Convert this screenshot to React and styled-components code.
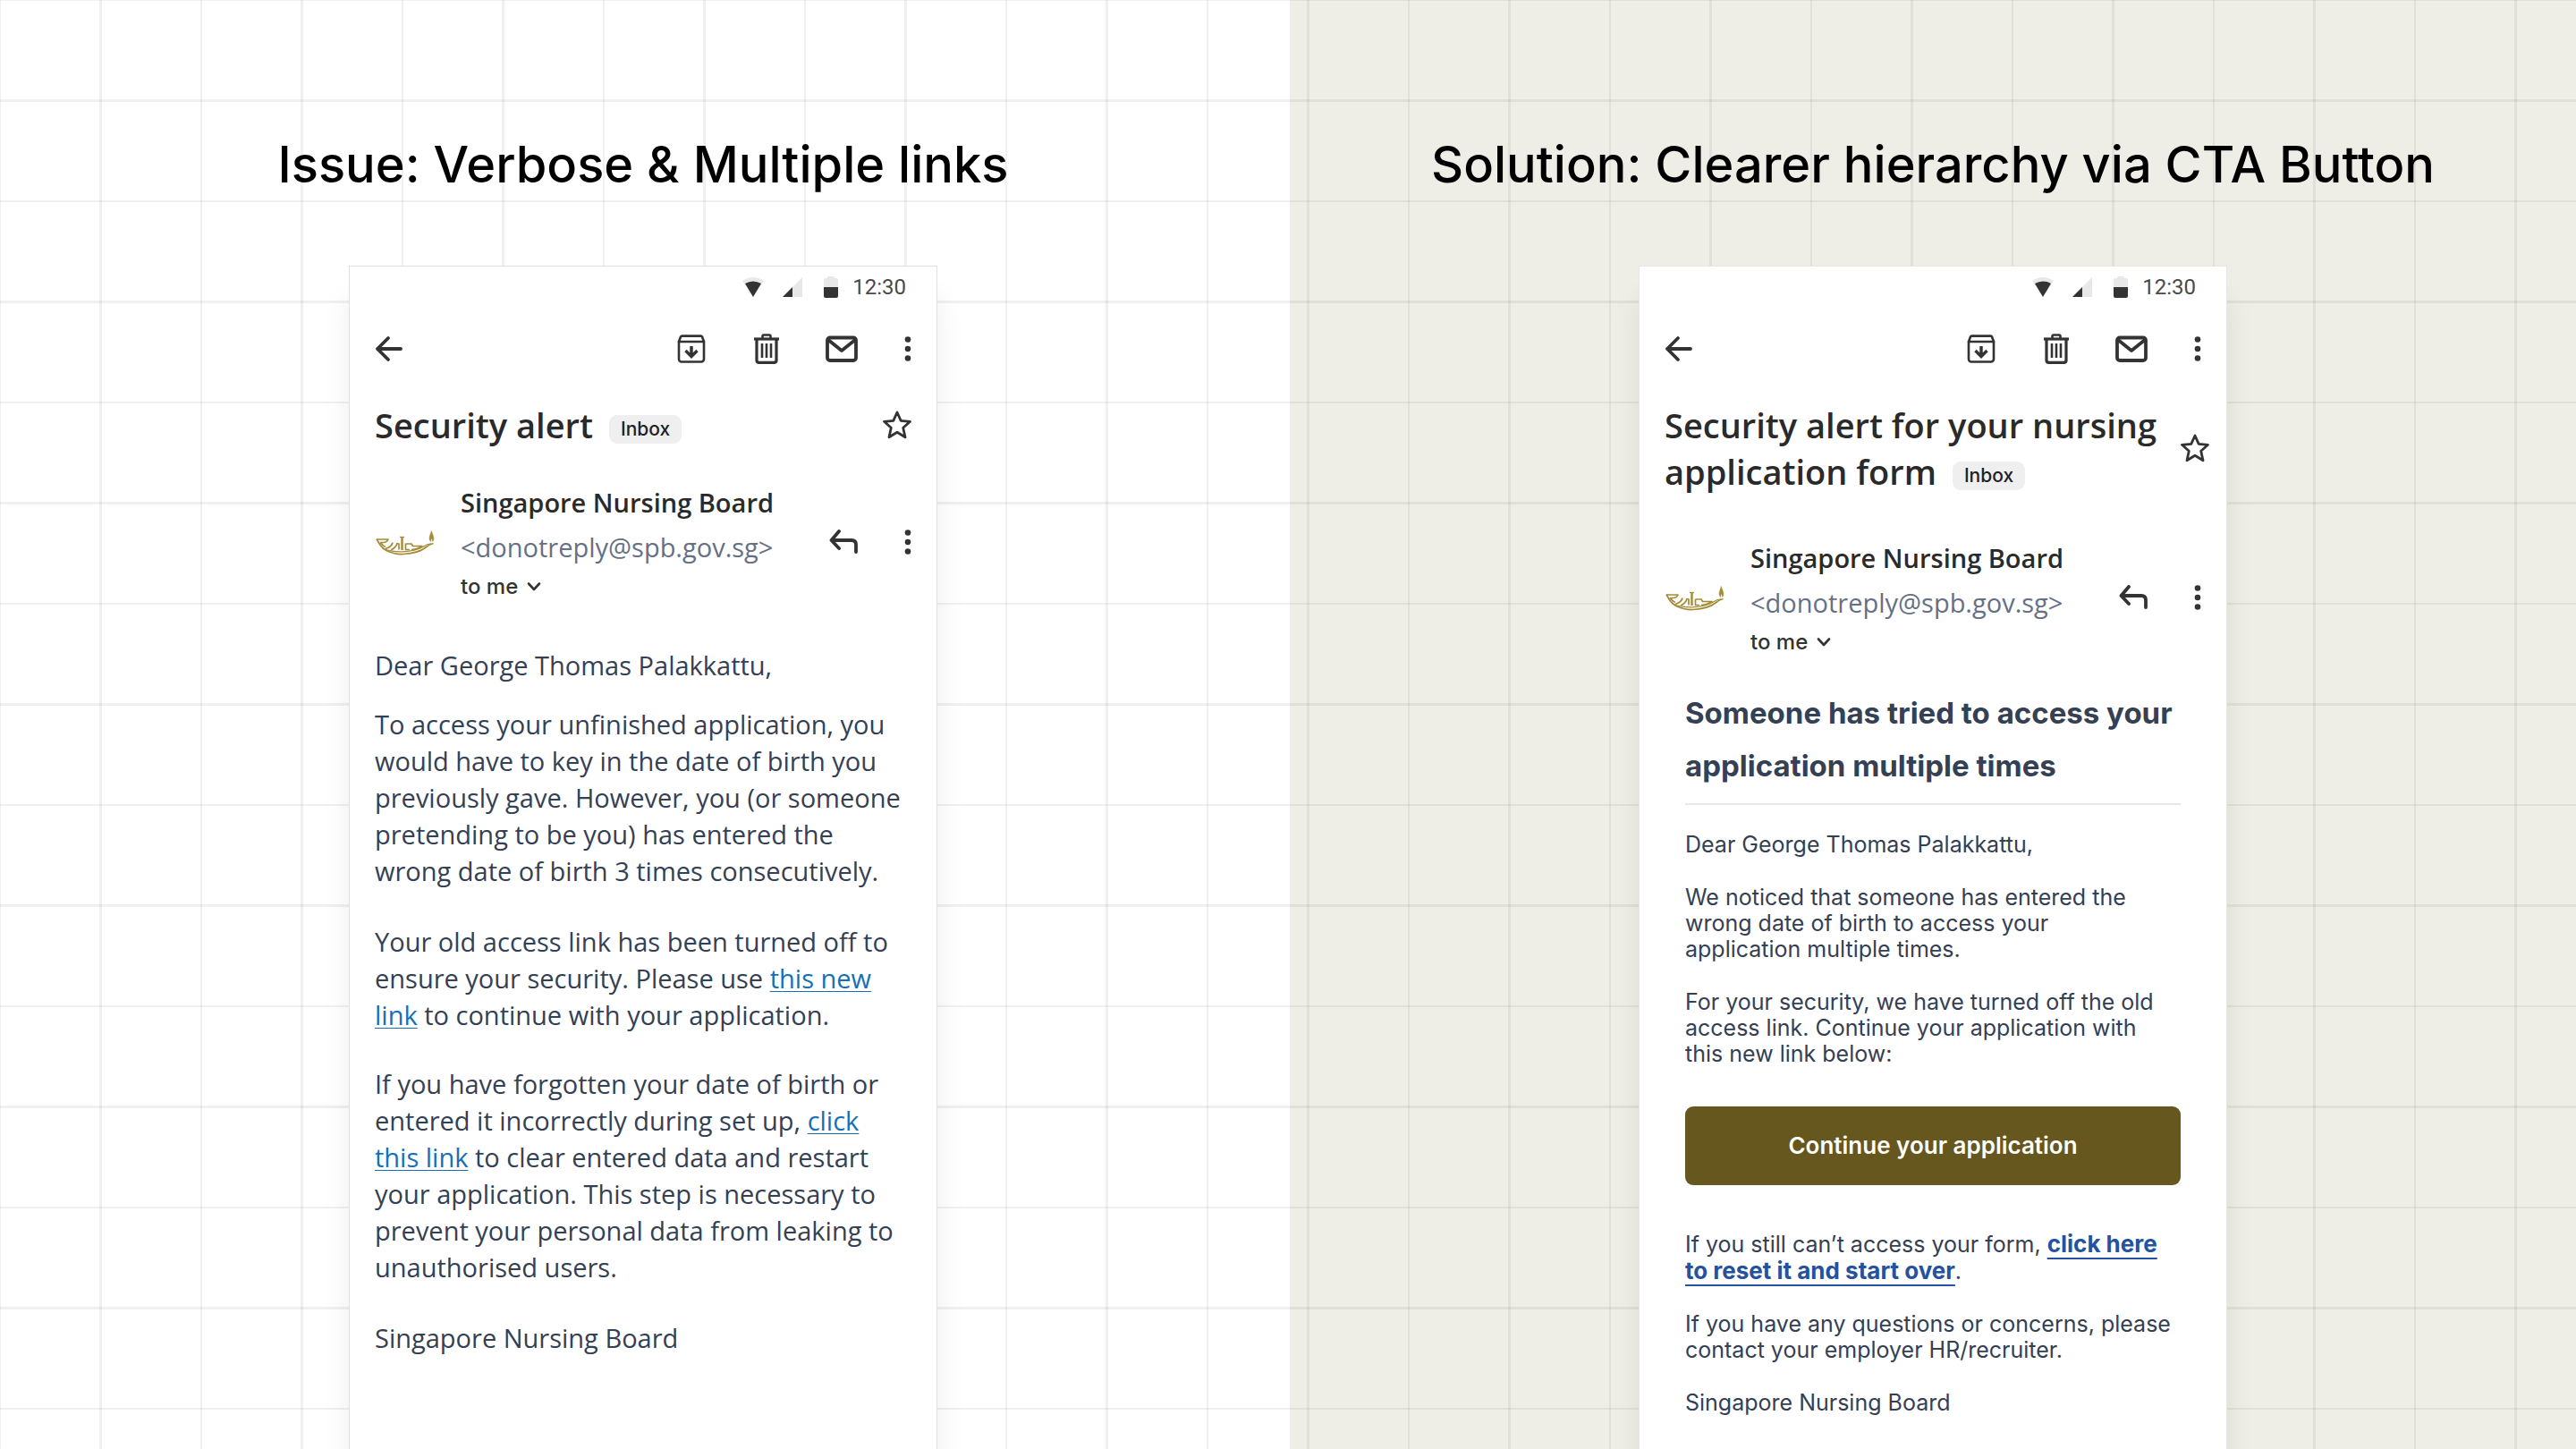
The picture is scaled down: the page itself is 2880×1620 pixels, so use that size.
import React from "react";
import styled, { createGlobalStyle } from "styled-components";

const Global = createGlobalStyle`
  *, *::before, *::after { box-sizing: border-box; }
  html, body { margin: 0; height: 100%; overflow: hidden; }
  #root { height: 100%; }
  h1, h2, h3, p { margin: 0; }
`;

const OPEN = `"Open Sans", "Noto Sans", sans-serif`;
const INTER = `Inter, "Liberation Sans", sans-serif`;
const INK = "#333333";
const SLATE = "#344054";

const Page = styled.main`
  display: grid;
  grid-template-columns: 1fr 1fr;
  column-gap: 4px;
  height: 100vh;
  overflow: hidden;
  position: relative;
  background: #ffffff;
`;

const Panel = styled.section`
  display: flex;
  flex-direction: column;
  align-items: center;
  min-width: 0;
  padding-top: 144px;
  background: ${(p) => p.$tone};
`;

/* Two rules per 225px tile give an even graph-paper rhythm. */
const GridLines = styled.div`
  position: absolute;
  inset: 0;
  pointer-events: none;
  --rule: rgba(0, 0, 0, 0.06);
  background-image:
    linear-gradient(to right, transparent 110px, var(--rule) 110px 113px, transparent 113px 223px, var(--rule) 223px),
    linear-gradient(to bottom, transparent 110px, var(--rule) 110px 113px, transparent 113px 223px, var(--rule) 223px);
  background-size: 225px 225px;
  background-position: 1px 1px;
`;

const PanelTitle = styled.h1`
  position: relative;
  font: 500 56px/80px ${INTER};
  color: #000;
  white-space: nowrap;
`;

const Phone = styled.article`
  position: relative;
  flex: 1 0 auto;
  width: 658px;
  margin-top: 73px;
  background: #fff;
  border: 1px solid ${(p) => p.$edge};
  border-bottom: 0;
  box-shadow: 0 36px 30px rgba(0, 0, 0, 0.08);
`;

const StatusBar = styled.div`
  display: flex;
  align-items: center;
  justify-content: flex-end;
  height: 46px;
  padding-right: 34px;
  svg { display: block; }
`;

const StatusIcons = styled.span`
  display: flex;
  align-items: center;
  gap: 20px;
`;

const Clock = styled.time`
  margin-left: 16px;
  font: 400 24px/30px Roboto, sans-serif;
  color: #4a4a4a;
`;

const Toolbar = styled.nav`
  display: flex;
  align-items: center;
  height: 92px;
  padding: 0 22px 0 24px;
`;

const ToolGroup = styled.div`
  display: flex;
  align-items: center;
  gap: 44px;
  margin-left: auto;
`;

const IconButton = styled.button`
  display: flex;
  align-items: center;
  justify-content: center;
  flex: none;
  width: ${(p) => p.$w || 40}px;
  height: 40px;
  padding: 0;
  border: 0;
  background: none;
  color: ${INK};
  svg { display: block; flex: none; }
`;

const SubjectRow = styled.header`
  display: flex;
  align-items: center;
  justify-content: space-between;
  padding: 13px ${(p) => p.$right}px 0 28px;
`;

const Subject = styled.h2`
  font: 600 38px/52px ${OPEN};
  color: #2a2a2a;
  white-space: nowrap;
`;

const Badge = styled.span`
  display: inline-block;
  height: 32px;
  margin-left: 18px;
  padding: 0 13px;
  border-radius: 9px;
  background: #efefef;
  vertical-align: middle;
  font: 500 21px/32px ${INTER};
  color: #222;
`;

const SenderRow = styled.div`
  display: flex;
  align-items: center;
  padding: ${(p) => p.$top}px 22px 0 28px;
`;

const Sender = styled.div`
  flex: 1;
  margin-left: 28px;
`;

const Name = styled.h3`
  font: 600 29px/50px ${OPEN};
  color: #2a2a2a;
`;

const Email = styled.p`
  font: 400 29px/50px ${OPEN};
  color: #667085;
`;

const Recipient = styled.button`
  display: flex;
  align-items: center;
  gap: 10px;
  height: 38px;
  padding: 0;
  border: 0;
  background: none;
  font: 500 24px/38px ${INTER};
  color: ${INK};
`;

const SenderTools = styled.div`
  display: flex;
  gap: 42px;
`;

const LetterBody = styled.div`
  display: flex;
  flex-direction: column;
  padding: 48px 34px 0 28px;
  font: 400 29px/41px ${OPEN};
  color: ${SLATE};
`;

const LetterText = styled.p`
  margin-top: ${(p) => p.$gap || 0}px;
`;

const TextLink = styled.a`
  color: #1570b8;
  text-decoration: underline;
  text-decoration-thickness: 1px;
  text-underline-offset: 3px;
`;

const NoticeBody = styled.div`
  display: flex;
  flex-direction: column;
  gap: 30px;
  padding: 31px 51px 0;
  font: 400 25px/29px ${INTER};
  color: ${SLATE};
`;

const NoticeTitle = styled.h3`
  padding-bottom: 12px;
  border-bottom: 2px solid #e4e7ec;
  font: 700 33px/59px ${INTER};
`;

const CallToAction = styled.button`
  height: 88px;
  margin: 14px 0 21px;
  border: 0;
  border-radius: 9px;
  background: #66571e;
  color: #fff;
  font: 600 26px/32px ${INTER};
`;

const StrongLink = styled.a`
  color: #2452a0;
  font-size: 26px;
  font-weight: 700;
  text-decoration: underline;
  text-decoration-thickness: 2px;
  text-underline-offset: 6px;
  text-decoration-skip-ink: none;
`;

const stroke = { fill: "none", stroke: "currentColor", strokeLinecap: "round", strokeLinejoin: "round" };

const WifiIcon = () => (
  <svg width="26" height="24" viewBox="0 0 26 24">
    <path d="M1 5Q13-3 25 5L13 23Z" fill="#e8e8e8" />
    <path d="M4 8Q13 3 22 8L13 23Z" fill={INK} />
  </svg>
);
const SignalIcon = () => (
  <svg width="26" height="24" viewBox="0 0 26 24">
    <path d="M22 1V23H0Z" fill="#e8e8e8" />
    <path d="M11 12V23H0Z" fill={INK} />
  </svg>
);
const BatteryIcon = () => (
  <svg width="16" height="26" viewBox="0 0 16 26">
    <path d="M0 5a2 2 0 0 1 2-2H4V2a1 1 0 0 1 1-1H11a1 1 0 0 1 1 1V3H14a2 2 0 0 1 2 2V13H0Z" fill="#e8e8e8" />
    <path d="M0 13H16V23a2 2 0 0 1-2 2H2a2 2 0 0 1-2-2Z" fill={INK} />
  </svg>
);

const BackIcon = () => (
  <svg width="32" height="30" viewBox="0 0 32 30" {...stroke} strokeWidth="3.8">
    <path d="M29 15H3M15 3L3 15L15 27" />
  </svg>
);
const ArchiveIcon = () => (
  <svg width="32" height="32" viewBox="0 0 32 32" {...stroke} strokeWidth="2.6">
    <path d="M2 8L4 2.5Q4.400 1.600 5.500 1.600H26.500Q27.600 1.600 28 2.500L30 8V27.500A3 3 0 0 1 27 30.500H5A3 3 0 0 1 2 27.500Z" />
    <path d="M2 8H30" />
    <path d="M16 13V24M9.500 18L16 24.500L22.500 18" strokeWidth="3.400" strokeLinecap="butt" strokeLinejoin="miter" />
  </svg>
);
const TrashIcon = () => (
  <svg width="28" height="34" viewBox="0 0 28 34" {...stroke} strokeWidth="3.2" strokeLinecap="butt">
    <path d="M0 6H28" />
    <path d="M9.500 6V3A1.500 1.500 0 0 1 11 1.500H17A1.500 1.500 0 0 1 18.500 3V6" strokeWidth="2.600" />
    <path d="M3 6V30A2.500 2.500 0 0 0 5.500 32.300H22.500A2.500 2.500 0 0 0 25 30V6" />
    <path d="M9 11V27M14 11V27M19 11V27" strokeWidth="2.600" />
  </svg>
);
const MailIcon = () => (
  <svg width="36" height="30" viewBox="0 0 36 30" {...stroke} strokeWidth="3.800">
    <rect x="2" y="2.500" width="32" height="25.500" rx="3" />
    <path d="M3 5L18 17L33 5" />
  </svg>
);
const MoreIcon = () => (
  <svg width="8" height="30" viewBox="0 0 8 30" fill="currentColor">
    <circle cx="4" cy="4.500" r="3.300" />
    <circle cx="4" cy="15" r="3.300" />
    <circle cx="4" cy="25.500" r="3.300" />
  </svg>
);
const StarIcon = () => (
  <svg width="34" height="34" viewBox="0 0 34 34" {...stroke} strokeWidth="2.800">
    <path d="M17 3L21.200 12.300L31.500 13.300L23.700 20.200L26 30.800L17 25.300L8 30.800L10.300 20.200L2.500 13.300L12.800 12.300Z" />
  </svg>
);
const ReplyIcon = () => (
  <svg width="32" height="28" viewBox="0 0 32 28" {...stroke} strokeWidth="3.800">
    <path d="M11 2L2.500 12L11 21M3 12H25Q30 12 30 17V25" />
  </svg>
);
const ChevronIcon = () => (
  <svg width="16" height="12" viewBox="0 0 16 12" {...stroke} strokeWidth="2.600">
    <path d="M2 2.500L8 9L14 2.500" />
  </svg>
);

/* Oil-lamp crest */
const LampLogo = () => (
  <svg width="68" height="38" viewBox="0 0 68 38" fill="none" stroke="#a38c38" strokeLinejoin="round">
    <path d="M2 16H15Q13.500 19.500 9.500 19.500H6.500Q9 23.500 12 24.500" strokeWidth="1.700" />
    <path d="M2 15.500Q7 25.500 13 28.500Q22 33 32 32.500Q49 31.500 57 25Q61 21.500 65.500 20.500" strokeWidth="1.700" />
    <path d="M8.500 26Q17 30 31 29.800Q47 29 54.500 24Q58.500 21 63 20.800" strokeWidth="1.200" />
    <path d="M28 13.500H33" strokeWidth="1.300" />
    <path d="M30.500 13.500V28" strokeWidth="2.400" />
    <path d="M12 26.500Q19 24.500 20 19.500M18 28Q24 25 25 20.500L27 21V27.500" strokeWidth="1.700" />
    <path d="M34.500 20.500V27.500H39M35 21H41L42.500 23.500H53Q48 27 41 27.500" strokeWidth="1.700" />
    <path d="M62.500 18.500C59.500 14.500 62 11.500 63.300 6.500C64.700 11.500 67.500 14.500 64.800 18.500L63.600 14Z" fill="#a38c38" strokeWidth="0.500" />
  </svg>
);

function Mail({ edge, subject, starInset, senderTop, children }) {
  return (
    <Phone $edge={edge}>
      <StatusBar>
        <StatusIcons>
          <WifiIcon />
          <SignalIcon />
          <BatteryIcon />
        </StatusIcons>
        <Clock>12:30</Clock>
      </StatusBar>
      <Toolbar aria-label="Message actions">
        <IconButton aria-label="Back"><BackIcon /></IconButton>
        <ToolGroup>
          <IconButton aria-label="Archive"><ArchiveIcon /></IconButton>
          <IconButton aria-label="Delete"><TrashIcon /></IconButton>
          <IconButton aria-label="Mark as unread"><MailIcon /></IconButton>
          <IconButton aria-label="More" $w={20}><MoreIcon /></IconButton>
        </ToolGroup>
      </Toolbar>
      <SubjectRow $right={starInset}>
        <Subject>{subject}<Badge>Inbox</Badge></Subject>
        <IconButton aria-label="Star" $w={34}><StarIcon /></IconButton>
      </SubjectRow>
      <SenderRow $top={senderTop}>
        <LampLogo />
        <Sender>
          <Name>Singapore Nursing Board</Name>
          <Email>&lt;donotreply@spb.gov.sg&gt;</Email>
          <Recipient>to me <ChevronIcon /></Recipient>
        </Sender>
        <SenderTools>
          <IconButton aria-label="Reply"><ReplyIcon /></IconButton>
          <IconButton aria-label="More" $w={20}><MoreIcon /></IconButton>
        </SenderTools>
      </SenderRow>
      {children}
    </Phone>
  );
}

export default function App() {
  return (
    <>
      <Global />
      <Page>
        <Panel $tone="#ffffff">
          <GridLines />
          <PanelTitle>Issue: Verbose &amp; Multiple links</PanelTitle>
          <Mail edge="#e0e0e0" subject="Security alert" starInset={27} senderTop={36}>
            <LetterBody>
              <LetterText>Dear George Thomas Palakkattu,</LetterText>
              <LetterText $gap={25}>
                To access your unfinished application, you would have to key in the date of birth you
                previously gave. However, you (or someone pretending to be you) has entered the wrong
                date of birth 3 times consecutively.
              </LetterText>
              <LetterText $gap={38}>
                Your old access link has been turned off to ensure your security. Please use{" "}
                <TextLink href="#new-link">this new link</TextLink> to continue with your application.
              </LetterText>
              <LetterText $gap={36}>
                If you have forgotten your date of birth or entered it incorrectly during set up,{" "}
                <TextLink href="#restart">click this link</TextLink> to clear entered data and restart
                your application. This step is necessary to prevent your personal data from leaking to
                unauthorised users.
              </LetterText>
              <LetterText $gap={38}>Singapore Nursing Board</LetterText>
            </LetterBody>
          </Mail>
        </Panel>
        <Panel $tone="#eeede6">
          <PanelTitle>Solution: Clearer hierarchy via CTA Button</PanelTitle>
          <Mail
            edge="#e6e6e6"
            subject={<>Security alert for your nursing<br />application form</>}
            starInset={18}
            senderTop={46}
          >
            <NoticeBody>
              <NoticeTitle>Someone has tried to access your application multiple times</NoticeTitle>
              <p>Dear George Thomas Palakkattu,</p>
              <p>
                We noticed that someone has entered the
                <br />
                wrong date of birth to access your
                <br />
                application multiple times.
              </p>
              <p>
                For your security, we have turned off the old
                <br />
                access link. Continue your application with
                <br />
                this new link below:
              </p>
              <CallToAction>Continue your application</CallToAction>
              <p>
                If you still can’t access your form,{" "}
                <StrongLink href="#reset">click here<br />to reset it and start over</StrongLink>.
              </p>
              <p>If you have any questions or concerns, please contact your employer HR/recruiter.</p>
              <p>Singapore Nursing Board</p>
            </NoticeBody>
          </Mail>
        </Panel>
      </Page>
    </>
  );
}
